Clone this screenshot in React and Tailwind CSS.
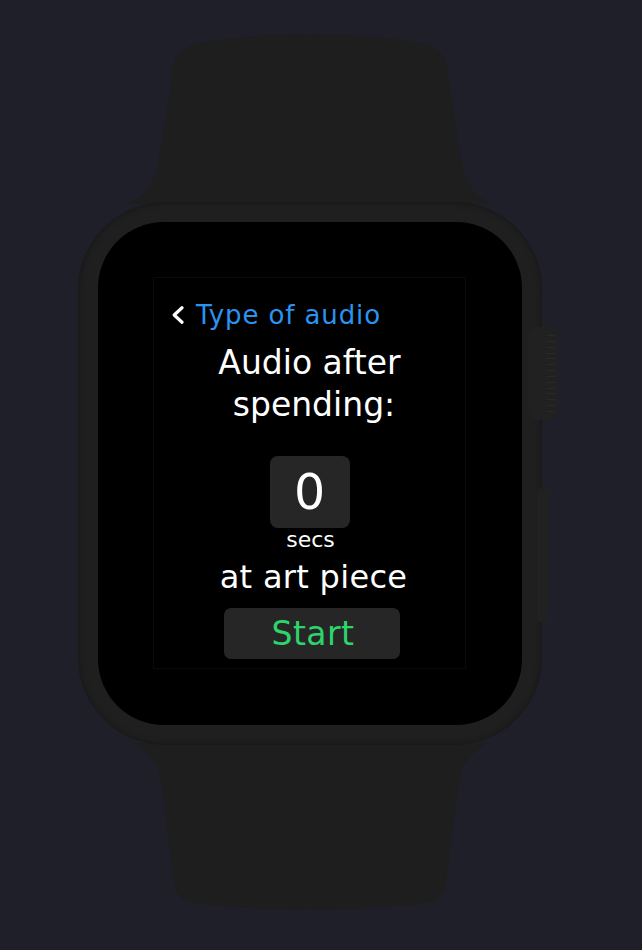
import React from "react";

const TopBand = () => (
  <svg width="380" height="170" viewBox="0 0 380 170" className="block shrink-0">
    <path
      d="M5 170 C25 165, 33 150, 38 130 C44 100, 48 70, 52 40 C54 20, 62 12, 85 8 Q190 -8 295 8 C318 12, 326 20, 328 40 C332 70, 336 100, 342 130 C347 150, 355 165, 375 170 Z"
      fill="#1e1e1e"
    />
  </svg>
);

const BottomBand = () => (
  <svg width="380" height="170" viewBox="0 0 380 170" className="block shrink-0">
    <path
      d="M12 0 L368 0 C350 10, 342 22, 340 35 C334 70, 330 110, 326 140 C323 157, 312 160, 290 162 Q190 172 90 162 C68 160, 57 157, 54 140 C50 110, 46 70, 40 35 C38 22, 30 10, 12 0 Z"
      fill="#1e1e1e"
    />
  </svg>
);

const BackChevron = () => (
  <svg width="12" height="18" viewBox="0 0 12 18" className="shrink-0">
    <polyline
      points="10,1.8 2.2,9 10,16.2"
      fill="none"
      stroke="#ffffff"
      strokeWidth="3.2"
      strokeLinecap="round"
      strokeLinejoin="round"
    />
  </svg>
);

export default function App() {
  return (
    <div className="w-full h-[950px] bg-[#1e1f29] flex flex-col items-center pt-[34px] pr-[22px] overflow-hidden font-['DejaVu_Sans',sans-serif]">
      <TopBand />

      {/* Case */}
      <div className="relative z-10 -mt-[2px] w-[464px] h-[543px] rounded-[88px] bg-[#1f1f1f] shadow-[inset_0_0_6px_rgba(0,0,0,0.35)] p-[20px] flex">
        {/* Digital crown */}
        <div className="absolute left-[450px] top-[125px] w-[30px] h-[93px] rounded-[10px] bg-[#212121] overflow-hidden flex flex-col justify-between py-[8px] pl-[18px] pr-[3px]">
          {Array.from({ length: 14 }).map((_, i) => (
            <div key={i} className="h-[1px] w-full bg-[#292929]" />
          ))}
        </div>
        {/* Side button */}
        <div className="absolute left-[459px] top-[286px] w-[11px] h-[135px] rounded-[5px] bg-[#212121]" />

        {/* Screen */}
        <div className="flex-1 rounded-[66px] bg-black pt-[55px] pl-[55px] pr-[56px] pb-[56px] flex">
          <div className="flex-1 border border-[#0b0b0b] flex flex-col">
            <div className="flex items-center pt-[22px] pl-[18px] gap-[12px]">
              <BackChevron />
              <span className="text-[26px] leading-[30px] tracking-[0.9px] text-[#2b93f0]">Type of audio</span>
            </div>

            <div className="mt-[12px] text-center text-white text-[33px] leading-[42px]">
              <div>Audio after</div>
              <div className="pl-[9px]">spending:</div>
            </div>

            <div className="mt-[30px] self-center w-[80px] h-[72px] rounded-[8px] bg-[#262626] flex items-center justify-center">
              <span className="text-white text-[49px] leading-none">0</span>
            </div>

            <div className="text-center text-white text-[22px] leading-[24px] pl-[2px]">secs</div>

            <div className="mt-[7px] text-center text-white text-[32px] leading-[36px] tracking-[0.3px] pl-[8px]">at art piece</div>

            <button className="mt-[13px] ml-[4px] self-center w-[176px] h-[51px] rounded-[7px] bg-[#262626] flex items-center justify-center pl-[3px]">
              <span className="text-[#2dd46c] text-[33px] leading-none tracking-[0.5px]">Start</span>
            </button>
          </div>
        </div>
      </div>

      <div className="-mt-[2px]">
        <BottomBand />
      </div>
    </div>
  );
}
